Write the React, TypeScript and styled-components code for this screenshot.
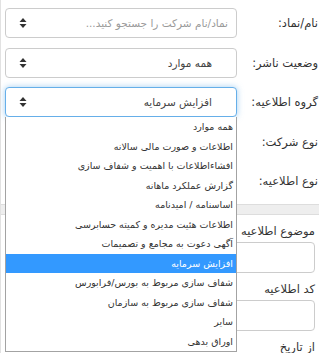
import React from 'react';
import styled, { createGlobalStyle } from 'styled-components';

const GlobalStyle = createGlobalStyle`
  body {
    margin: 0;
    background: #fff;
    font-family: "DejaVu Sans", "Noto Sans", sans-serif;
    color: #333;
  }
`;

const Page = styled.div`
  direction: rtl;
  width: 319px;
  height: 353px;
  overflow: hidden;
  box-sizing: border-box;
  border-left: 1px solid #e2e2e2;
  background: #fff;
`;

const HorizontalForm = styled.div`
  display: flex;
  flex-direction: column;
  gap: 9.5px;
  padding: 8px 0 8px 4px;
`;

const Row = styled.div`
  display: grid;
  grid-template-columns: 82px 232px;
  align-items: center;
  height: 30px;
`;

const Label = styled.label`
  font-size: 11.5px;
  white-space: nowrap;
  padding-right: 1px;
  color: #333;
`;

const Field = styled.div`
  position: relative;
  height: 100%;
`;

const SelectBox = styled.div<{ $focused?: boolean; $search?: boolean }>`
  box-sizing: border-box;
  height: 30px;
  display: flex;
  align-items: center;
  justify-content: space-between;
  padding: ${p => (p.$search ? '0 8px 0 13px' : '0 24px 0 13px')};
  border: 1px solid ${p => (p.$focused ? '#66afe9' : '#ccc')};
  border-radius: 4px;
  background: #fff;
  box-shadow: ${p => (p.$focused ? '0 0 6px rgba(102, 175, 233, 0.6)' : 'none')};
  font-size: 10.5px;
`;

const Value = styled.span<{ $placeholder?: boolean }>`
  color: ${p => (p.$placeholder ? '#9a9a9a' : '#444')};
  white-space: nowrap;
`;

const Dropdown = styled.ul`
  position: absolute;
  top: 100%;
  left: 0;
  right: 0;
  margin: 0;
  padding: 0;
  list-style: none;
  background: #fff;
  border: 1px solid #a3a3a3;
  border-top: none;
  z-index: 5;
`;

const Option = styled.li<{ $selected?: boolean }>`
  height: 19.5px;
  line-height: 19.5px;
  padding-right: 3px;
  font-size: 9.5px;
  white-space: nowrap;
  color: ${p => (p.$selected ? '#fff' : '#333')};
  background: ${p => (p.$selected ? '#3399ff' : 'transparent')};
`;

const Divider = styled.div`
  height: 9px;
  background: #eee;
  border-top: 1px solid #ddd;
  border-bottom: 1px solid #ddd;
`;

const VerticalForm = styled.div`
  display: flex;
  flex-direction: column;
  padding: 7px 4px 0 4px;
`;

const Group = styled.div`
  display: flex;
  flex-direction: column;
  margin-bottom: 7px;
`;

const StackLabel = styled.label`
  font-size: 11.5px;
  line-height: 18px;
  margin-bottom: 2px;
  color: #333;
`;

const TextInput = styled.div`
  box-sizing: border-box;
  height: 31px;
  border: 1px solid #ccc;
  border-radius: 4px;
  background: #fff;
`;

const Arrows = () => (
  <svg width="8" height="12" viewBox="0 0 8 12">
    <path d="M0.5 5 L4 1 L7.5 5 Z" fill="#333" />
    <path d="M0.5 7 L4 11 L7.5 7 Z" fill="#333" />
  </svg>
);

const options = [
  'همه موارد',
  'اطلاعات و صورت مالی سالانه',
  'افشاءاطلاعات با اهمیت و شفاف سازی',
  'گزارش عملکرد ماهانه',
  'اساسنامه / امیدنامه',
  'اطلاعات هئیت مدیره و کمیته حسابرسی',
  'آگهی دعوت به مجامع و تصمیمات',
  'افزایش سرمایه',
  'شفاف سازی مربوط به بورس/فرابورس',
  'شفاف سازی مربوط به سازمان',
  'سایر',
  'اوراق بدهی',
];

const selected = 'افزایش سرمایه';

export default function App() {
  return (
    <Page>
      <GlobalStyle />
      <HorizontalForm>
        <Row>
          <Label>نام/نماد:</Label>
          <Field>
            <SelectBox $search>
              <Value $placeholder>نماد/نام شرکت را جستجو کنید...</Value>
              <Arrows />
            </SelectBox>
          </Field>
        </Row>
        <Row>
          <Label>وضعیت ناشر:</Label>
          <Field>
            <SelectBox>
              <Value>همه موارد</Value>
              <Arrows />
            </SelectBox>
          </Field>
        </Row>
        <Row>
          <Label>گروه اطلاعیه:</Label>
          <Field>
            <SelectBox $focused>
              <Value>{selected}</Value>
              <Arrows />
            </SelectBox>
            <Dropdown>
              {options.map(o => (
                <Option key={o} $selected={o === selected}>
                  {o}
                </Option>
              ))}
            </Dropdown>
          </Field>
        </Row>
        <Row>
          <Label>نوع شرکت:</Label>
          <Field>
            <SelectBox />
          </Field>
        </Row>
        <Row>
          <Label>نوع اطلاعیه:</Label>
          <Field>
            <SelectBox />
          </Field>
        </Row>
      </HorizontalForm>
      <Divider />
      <VerticalForm>
        <Group>
          <StackLabel>موضوع اطلاعیه</StackLabel>
          <TextInput />
        </Group>
        <Group>
          <StackLabel>کد اطلاعیه</StackLabel>
          <TextInput />
        </Group>
        <Group>
          <StackLabel>از تاریخ</StackLabel>
          <TextInput />
        </Group>
      </VerticalForm>
    </Page>
  );
}
